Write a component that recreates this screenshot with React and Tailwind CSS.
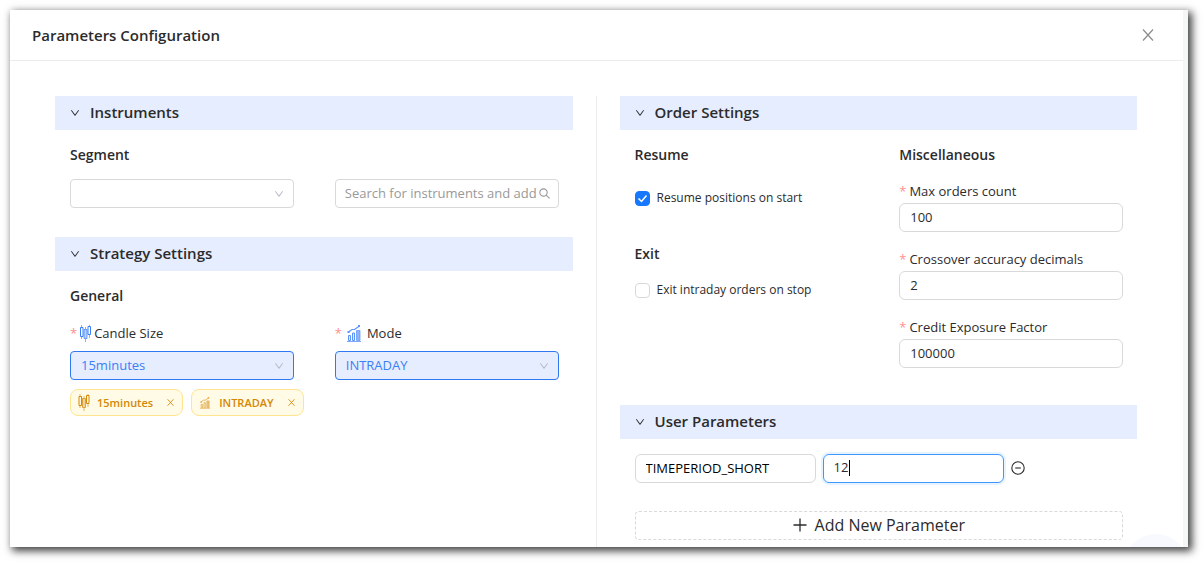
import { useState } from "react";

const downPath =
  "M884 256h-75c-5.100 0-9.900 2.500-12.900 6.600L512 654.200 227.900 262.600c-3-4.100-7.800-6.600-12.900-6.600h-75c-6.500 0-10.300 7.400-6.500 12.700l352.600 486.100c12.800 17.600 39 17.600 51.700 0l352.600-486.100c3.900-5.300.1-12.700-6.400-12.700z";

function Down({ className }) {
  return (
    <svg viewBox="64 64 896 896" fill="currentColor" className={className} aria-hidden="true">
      <path d={downPath} />
    </svg>
  );
}

function Cross({ className, strokeWidth = 1 }) {
  return (
    <svg viewBox="0 0 12 12" fill="none" stroke="currentColor" strokeWidth={strokeWidth} className={className} aria-hidden="true">
      <path d="M1 .5 11 11.500M11 .5 1 11.500" />
    </svg>
  );
}

function Search({ className }) {
  return (
    <svg viewBox="0 0 12 12" fill="none" stroke="currentColor" strokeWidth="1.200" className={className} aria-hidden="true">
      <circle cx="4.900" cy="4.900" r="4" />
      <path d="m7.800 7.800 3.700 3.500" />
    </svg>
  );
}

function Candles({ className }) {
  return (
    <svg viewBox="0 0 11 17" fill="none" stroke="currentColor" className={className} aria-hidden="true">
      <path d="M1.500 0v2M1.500 12v2M5.500 2v2M5.500 14v3M9.500 0v1M9.500 10v3" strokeOpacity=".6" />
      <path d="M4 4.500h3v9h-3z" fill="currentColor" fillOpacity=".35" strokeOpacity=".7" />
      <path d="M.5 2.500h2.500v9h-2.500zM8 1.500h2.500v8h-2.500z" />
    </svg>
  );
}

function Growth({ className }) {
  return (
    <svg viewBox="0 0 14 17" fill="none" stroke="currentColor" className={className} aria-hidden="true">
      <path d="M1.500 7 5 4.500 7.500 4.500 12.500 1" strokeWidth="1.200" />
      <path d="M11 0h2v2h-2zM.5 6h2v2h-2z" fill="currentColor" stroke="none" />
      <path d="M1.500 10.500h2v5h-2zM5.500 8h2v7.500h-2z" fill="currentColor" fillOpacity=".2" />
      <path d="M9.500 5.500h3.500v10h-3.500z" fill="currentColor" fillOpacity=".7" strokeOpacity=".7" />
      <path d="M0 16.500h14" strokeOpacity=".8" />
    </svg>
  );
}

function Section({ title, children }) {
  const [open, setOpen] = useState(true);
  return (
    <section>
      <h2 className="bg-[#e6edfe] text-[15px] font-semibold">
        <button
          type="button"
          aria-expanded={open}
          onClick={() => setOpen(!open)}
          className="flex h-[34px] w-full items-center gap-2.5 px-[15px] pb-0.5 text-left"
        >
          <Down className="mt-0.5 size-2.5" />
          {title}
        </button>
      </h2>
      {open && <div className="pt-[15px] pr-3.5 pl-[15px]">{children}</div>}
    </section>
  );
}

function Heading({ children }) {
  return <h3 className="text-sm leading-5 font-semibold">{children}</h3>;
}

function Star() {
  return <span className="text-[#ff8f8f]">*</span>;
}

function SelectBox({ id, label, value, active }) {
  return (
    <div className="relative">
      <select
        id={id}
        aria-label={label}
        defaultValue={value}
        className={
          active
            ? "block h-[29px] w-full appearance-none rounded border border-[#2f78f0] bg-[#e6edfe] px-2.5 text-[#3b7ff5]"
            : "block h-[29px] w-full appearance-none rounded border border-[#d9d9d9] bg-white px-2.5"
        }
      >
        <option>{value}</option>
      </select>
      <Down className="pointer-events-none absolute top-2.5 right-2.5 size-2.5 text-[#b4b8c2]" />
    </div>
  );
}

function NumberField({ id, label, value }) {
  return (
    <div>
      <label htmlFor={id} className="flex h-[22px] items-center gap-[3px]">
        <Star />
        {label}
      </label>
      <input
        id={id}
        defaultValue={value}
        className="block h-[29px] w-full rounded-md border border-[#d9d9d9] px-2.5 pb-0.5"
      />
    </div>
  );
}

function Tag({ icon, children }) {
  return (
    <span className="flex h-[27px] items-center rounded-lg border border-[#ffe58f] bg-[#fffbe6] px-[7px] text-[11px] font-semibold text-[#d48806]">
      {icon}
      <span className="pt-px">{children}</span>
      <button type="button" aria-label="Remove" className="ml-3.5 pr-px">
        <Cross className="size-[7px]" strokeWidth={1.500} />
      </button>
    </span>
  );
}

export default function App() {
  return (
    <div className="bg-white py-2.5 pr-4 pb-4 pl-2.5 font-['Open_Sans','Noto_Sans',sans-serif] text-[13px] text-[#2b2b2d]">
      <main className="relative overflow-hidden border-r-[5px] border-[#f5f7f7] bg-white shadow-[3px_3px_8px_1px_rgba(0,0,0,0.75)]">
        <header className="flex h-[51px] items-center justify-between border-b border-[#ececec] pr-[29px] pl-[22px]">
          <h1 className="text-[15px] font-semibold">Parameters Configuration</h1>
          <button type="button" aria-label="Close" className="text-[#8c8c8c]">
            <Cross className="size-3" strokeWidth={1.200} />
          </button>
        </header>

        <div className="grid grid-cols-[1fr_1px_1fr] gap-x-[23px] pt-[35px] pr-[46px] pl-[45px]">
          <div>
            <Section title="Instruments">
              <Heading>Segment</Heading>
              <div className="mt-3.5 mb-[29px] grid grid-cols-2 gap-x-[41px]">
                <SelectBox id="segment" label="Segment" value="" />
                <div className="flex h-[29px] items-center rounded border border-[#d9d9d9] pr-2 pl-[9px] text-[#999]">
                  <input
                    aria-label="Search for instruments"
                    placeholder="Search for instruments and add"
                    className="w-full min-w-0 placeholder:text-[#999]"
                  />
                  <Search className="size-[11px] shrink-0" />
                </div>
              </div>
            </Section>
            <Section title="Strategy Settings">
              <Heading>General</Heading>
              <div className="mt-4 grid grid-cols-2 gap-x-[41px]">
                <div>
                  <label htmlFor="candle" className="mb-1.5 flex h-[23px] items-center">
                    <Star />
                    <Candles className="mr-[3px] ml-[3px] h-[17px] w-[11px] text-[#3b7ff5]" />
                    Candle Size
                  </label>
                  <SelectBox id="candle" value="15minutes" active />
                </div>
                <div>
                  <label htmlFor="mode" className="mb-1.5 flex h-[23px] items-center">
                    <Star />
                    <Growth className="mr-1.5 ml-[5px] h-[17px] w-3.5 text-[#5b93f7]" />
                    Mode
                  </label>
                  <SelectBox id="mode" value="INTRADAY" active />
                </div>
              </div>
              <div className="mt-[9px] flex gap-2">
                <Tag icon={<Candles className="mr-[7px] h-[17px] w-3" />}>15minutes</Tag>
                <Tag icon={<Growth className="mr-[9px] ml-px h-3 w-2.5 opacity-70" />}>INTRADAY</Tag>
              </div>
            </Section>
          </div>

          <div className="bg-[#ececec]" />

          <div className="pb-[7px]">
            <Section title="Order Settings">
              <div className="mb-[37px] grid grid-cols-2 gap-x-[41px]">
                <div>
                  <Heading>Resume</Heading>
                  <label className="mt-[23px] flex h-5 items-center gap-[7px] text-xs">
                    <input
                      type="checkbox"
                      defaultChecked
                      className="size-[15px] appearance-none rounded border border-[#d9d9d9] checked:border-[#1677ff] checked:bg-[#1677ff] checked:bg-[url('data:image/svg+xml,%3Csvg%20xmlns=%22http://www.w3.org/2000/svg%22%20viewBox=%220%200%2013%2013%22%3E%3Cpath%20d=%22M2.500%206.500%205.500%209.500%2010.500%203.500%22%20fill=%22none%22%20stroke=%22white%22%20stroke-width=%221.500%22/%3E%3C/svg%3E')]"
                    />
                    Resume positions on start
                  </label>
                  <div className="mt-9">
                    <Heading>Exit</Heading>
                  </div>
                  <label className="mt-4 flex h-5 items-center gap-[7px] text-xs">
                    <input
                      type="checkbox"
                      className="size-[15px] appearance-none rounded border border-[#d9d9d9]"
                    />
                    Exit intraday orders on stop
                  </label>
                </div>
                <div>
                  <Heading>Miscellaneous</Heading>
                  <div className="mt-4 grid gap-[17px]">
                    <NumberField id="max" label="Max orders count" value="100" />
                    <NumberField id="accuracy" label="Crossover accuracy decimals" value="2" />
                    <NumberField id="credit" label="Credit Exposure Factor" value="100000" />
                  </div>
                </div>
              </div>
            </Section>
            <Section title="User Parameters">
              <div className="flex items-center gap-[7px]">
                <input
                  aria-label="Parameter name"
                  defaultValue="TIMEPERIOD_SHORT"
                  className="h-[29px] w-[181px] rounded-md border border-[#d9d9d9] px-2.5 pb-0.5 text-black"
                />
                <div className="flex h-[29px] w-[181px] items-center rounded-md border border-[#4096ff] px-2.5 pb-0.5 shadow-[0_0_0_2px_rgba(5,145,255,0.1)]">
                  <input
                    aria-label="Parameter value"
                    defaultValue="12"
                    className="w-[15px] outline-none"
                  />
                  <span className="h-4 w-px bg-black" />
                </div>
                <button type="button" aria-label="Remove parameter" className="pb-0.5">
                  <svg viewBox="0 0 14 14" fill="none" stroke="currentColor" strokeWidth="1.100" className="size-3.5">
                    <circle cx="7" cy="7" r="6.200" />
                    <path d="M4.200 7h5.600" />
                  </svg>
                </button>
              </div>
              <button
                type="button"
                className="mt-[28px] flex h-[29px] w-full items-center justify-center gap-2 rounded border border-dashed border-[#d9d9d9] pb-0.5 text-base"
              >
                <svg viewBox="0 0 14 14" fill="none" stroke="currentColor" strokeWidth="1.300" className="size-3.5">
                  <path d="M7 .5v13M.5 7h13" />
                </svg>
                Add New Parameter
              </button>
            </Section>
          </div>
        </div>
        <div className="absolute right-[-5px] -bottom-[51px] size-16 rounded-full bg-[#f7f9fe]" />
      </main>
    </div>
  );
}
